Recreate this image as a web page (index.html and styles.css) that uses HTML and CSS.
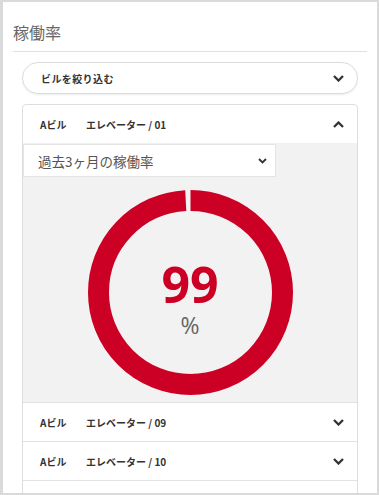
FILE: index.html
```html
<!DOCTYPE html>
<html lang="ja">
  <head>
    <meta charset="UTF-8" />
    <title>稼働率</title>
    <link rel="stylesheet" href="styles.css">
  </head>
  <body>
    <div class="panel">
      <h2 class="panel-title">稼働率</h2>

      <!-- Building filter -->
      <div class="filter">
        <span>ビルを絞り込む</span>
        <svg class="chev" width="11" height="7" viewBox="0 0 11 7"><polyline points="1,1 5.5,5.5 10,1" /></svg>
      </div>

      <!-- Elevator list -->
      <div class="acc">
        <div class="acc-item open">
          <div class="acc-head">
            <span class="bld">Aビル</span>
            <span class="elv">エレベーター / 01</span>
            <svg class="chev" width="11" height="7" viewBox="0 0 11 7"><polyline points="1,6 5.5,1.5 10,6" /></svg>
          </div>
          <div class="acc-body">
            <div class="period">
              <span>過去3ヶ月の稼働率</span>
              <svg class="chev small" width="9" height="6" viewBox="0 0 9 6"><polyline points="1,1 4.5,4.5 8,1" /></svg>
            </div>
            <div class="gauge">
              <svg width="205" height="205" viewBox="0 0 205 205">
                <circle class="gauge-ring" cx="102.5" cy="102.5" r="92" stroke-dasharray="572.27 578.05" transform="rotate(-90 102.5 102.5)" />
              </svg>
              <div class="gauge-value">
                <span class="num">99</span>
                <span class="unit">%</span>
              </div>
            </div>
          </div>
        </div>

        <div class="acc-item">
          <div class="acc-head">
            <span class="bld">Aビル</span>
            <span class="elv">エレベーター / 09</span>
            <svg class="chev" width="11" height="7" viewBox="0 0 11 7"><polyline points="1,1 5.5,5.5 10,1" /></svg>
          </div>
        </div>

        <div class="acc-item">
          <div class="acc-head">
            <span class="bld">Aビル</span>
            <span class="elv">エレベーター / 10</span>
            <svg class="chev" width="11" height="7" viewBox="0 0 11 7"><polyline points="1,1 5.5,5.5 10,1" /></svg>
          </div>
        </div>

        <div class="acc-item">
          <div class="acc-head"></div>
        </div>
      </div>
    </div>
  </body>
</html>
```

FILE: styles.css
```css
body {
  margin: 0;
  padding: 0;
  background: #fff;
  font-family: "Noto Sans CJK JP", "Noto Sans", sans-serif;
  color: #333;
}

.panel {
  width: 379px;
  height: 495px;
  box-sizing: border-box;
  border: 2px solid #dadada;
  border-left-width: 3px;
  padding: 0 10px 0 10px;
  overflow: hidden;
}

.panel-title {
  margin: 0;
  padding: 18px 0 7px;
  font-size: 16px;
  line-height: 24px;
  font-weight: 400;
  color: #666;
  border-bottom: 1px solid #e0e0e0;
}

/* Filter pill */
.filter {
  margin: 10px 9px 0;
  height: 32px;
  box-sizing: border-box;
  border: 1px solid #dcdcdc;
  border-radius: 16px;
  box-shadow: 0 1px 2px rgba(0, 0, 0, 0.08);
  padding: 0 13px 0 18px;
  display: flex;
  align-items: center;
  justify-content: space-between;
  font-size: 10px;
  font-weight: 700;
  letter-spacing: 0.4px;
}

.chev polyline {
  fill: none;
  stroke: #333;
  stroke-width: 2.3;
}

.chev.small polyline {
  stroke-width: 1.8;
}

/* Accordion */
.acc {
  margin: 10px 9px 0;
  border: 1px solid #dedede;
  border-radius: 4px 4px 0 0;
}

.acc-item + .acc-item {
  border-top: 1px solid #e2e2e2;
}

.acc-head {
  height: 38px;
  display: flex;
  align-items: center;
  padding: 0 13px 0 17px;
  font-size: 10px;
  font-weight: 700;
}

.bld {
  width: 46px;
}

.elv {
  flex: 1;
}

.acc-body {
  background: #f2f2f2;
  padding: 1px 0 7px;
}

.period {
  width: 253px;
  height: 33px;
  box-sizing: border-box;
  background: #fff;
  border: 1px solid #e4e4e4;
  padding: 0 8px 0 14px;
  display: flex;
  align-items: center;
  justify-content: space-between;
  font-size: 13.5px;
  color: #555;
}

.gauge {
  position: relative;
  width: 205px;
  height: 205px;
  margin: 13px auto 0;
}

.gauge svg {
  display: block;
}

.gauge-ring {
  fill: none;
  stroke: #cc0025;
  stroke-width: 21;
}

.gauge-value {
  position: absolute;
  inset: 0;
  padding-top: 6px;
  display: flex;
  flex-direction: column;
  align-items: center;
  justify-content: center;
  font-family: "Open Sans", sans-serif;
}

.num {
  font-size: 50px;
  line-height: 58px;
  font-weight: 700;
  color: #cc0025;
}

.unit {
  font-size: 23px;
  line-height: 24px;
  font-weight: 400;
  color: #666;
}
```
